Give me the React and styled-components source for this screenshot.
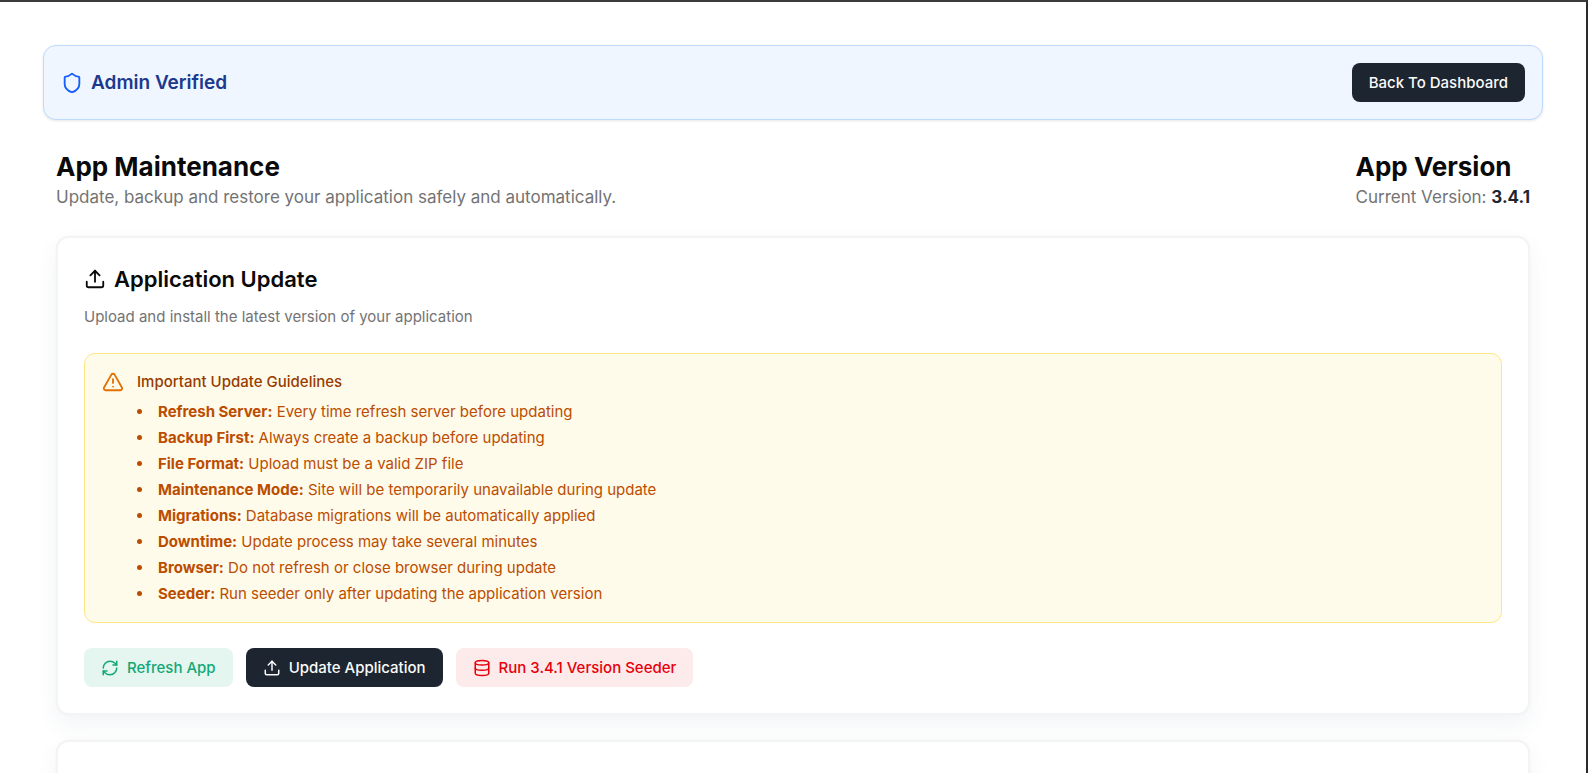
import styled, { createGlobalStyle } from "styled-components";
import { Database, RefreshCw, Shield, TriangleAlert, Upload } from "lucide-react";

const guidelines = [
  { label: "Refresh Server:", text: "Every time refresh server before updating" },
  { label: "Backup First:", text: "Always create a backup before updating" },
  { label: "File Format:", text: "Upload must be a valid ZIP file" },
  { label: "Maintenance Mode:", text: "Site will be temporarily unavailable during update" },
  { label: "Migrations:", text: "Database migrations will be automatically applied" },
  { label: "Downtime:", text: "Update process may take several minutes" },
  { label: "Browser:", text: "Do not refresh or close browser during update" },
  { label: "Seeder:", text: "Run seeder only after updating the application version" },
];

const App = () => {
  return (
    <>
      <GlobalStyle />
      <Page>
        <Banner>
          <BannerTitle>
            <Shield size={22} color="#155dfc" />
            Admin Verified
          </BannerTitle>
          <Button type="button">Back To Dashboard</Button>
        </Banner>
        <Content>
          <Header>
            <div>
              <Heading as="h1">App Maintenance</Heading>
              <Lead>
                Update, backup and restore your application safely and
                automatically.
              </Lead>
            </div>
            <div>
              <Heading>App Version</Heading>
              <Lead>
                Current Version: <strong>3.4.1</strong>
              </Lead>
            </div>
          </Header>
          <Cards>
            <Card>
              <CardTitle>
                <Upload size={22} />
                Application Update
              </CardTitle>
              <CardText>
                Upload and install the latest version of your application
              </CardText>
              <Notice>
                <TriangleAlert size={22} color="#e17100" />
                <div>
                  <NoticeTitle>Important Update Guidelines</NoticeTitle>
                  <NoticeList>
                    {guidelines.map((item) => (
                      <li key={item.label}>
                        <strong>{item.label}</strong> {item.text}
                      </li>
                    ))}
                  </NoticeList>
                </div>
              </Notice>
              <Actions>
                <Button type="button" $tone="success">
                  <RefreshCw size={18} />
                  Refresh App
                </Button>
                <Button type="button">
                  <Upload size={18} />
                  Update Application
                </Button>
                <Button type="button" $tone="danger">
                  <Database size={18} />
                  Run 3.4.1 Version Seeder
                </Button>
              </Actions>
            </Card>
            <Card />
          </Cards>
        </Content>
      </Page>
    </>
  );
};

export default App;

const tones = {
  dark: { background: "#1d2530", color: "#fafafa" },
  success: { background: "#e5f5ef", color: "#12a876" },
  danger: { background: "#fdeaea", color: "#e7000b" },
};

const GlobalStyle = createGlobalStyle`
  * {
    box-sizing: border-box;
  }
  body {
    margin: 0;
    background: #fff;
    color: #0a0a0a;
    font-family: Inter, "Liberation Sans", sans-serif;
  }
  h1, h2, h3, p, ul {
    margin: 0;
  }
  svg {
    flex-shrink: 0;
  }
`;

const Page = styled.main`
  height: 100vh;
  overflow: hidden;
  padding: 43px 43px 0;
  border-top: 2px solid #3c3c3c;
  border-right: 2px solid #2b2b2b;
`;

const Banner = styled.section`
  display: flex;
  align-items: center;
  justify-content: space-between;
  padding: 17px;
  border: 1px solid #bedbff;
  border-radius: 13px;
  background: #eff6ff;
  box-shadow: 0 1px 3px rgba(0, 0, 0, 0.1);
`;

const BannerTitle = styled.h2`
  display: flex;
  align-items: center;
  gap: 8px;
  color: #1c398e;
  font-size: 19px;
  line-height: 28px;
  font-weight: 600;
`;

const Button = styled.button`
  display: inline-flex;
  align-items: center;
  gap: 8px;
  height: 39px;
  padding: 0 17px;
  border: 0;
  border-radius: 8px;
  background: ${(props) => tones[props.$tone || "dark"].background};
  color: ${(props) => tones[props.$tone || "dark"].color};
  font-family: inherit;
  font-size: 15px;
  line-height: 22px;
  font-weight: 500;
  cursor: pointer;
`;

const Content = styled.div`
  display: flex;
  flex-direction: column;
  gap: 26px;
  padding: 29px 13px 0;
`;

const Header = styled.header`
  display: flex;
  justify-content: space-between;
`;

const Heading = styled.h2`
  font-size: 26px;
  line-height: 35px;
  font-weight: 700;
`;

const Lead = styled.p`
  color: #737373;
  font-size: 17px;
  line-height: 26px;
  strong {
    color: #1d2530;
    font-weight: 700;
  }
`;

const Cards = styled.div`
  display: flex;
  flex-direction: column;
  gap: 25px;
`;

const Card = styled.section`
  min-height: 240px;
  padding: 27px 26px 26px;
  border: 2px solid #f4f4f5;
  border-radius: 13px;
  background: #fff;
  box-shadow: 0 0 2px rgba(0, 0, 0, 0.05),
    0 10px 22px rgba(71, 95, 133, 0.07);
`;

const CardTitle = styled.h3`
  display: flex;
  align-items: center;
  gap: 8px;
  font-size: 22px;
  line-height: 28px;
  font-weight: 600;
`;

const CardText = styled.p`
  margin-top: 13px;
  color: #737373;
  font-size: 15px;
  line-height: 22px;
`;

const Notice = styled.div`
  display: flex;
  gap: 13px;
  margin-top: 25px;
  padding: 17px;
  border: 1px solid #fee685;
  border-radius: 11px;
  background: #fffbeb;
  color: #bb4d00;
  font-size: 15px;
  line-height: 22px;
`;

const NoticeTitle = styled.h3`
  color: #973c00;
  font-size: 15px;
  font-weight: 500;
`;

const NoticeList = styled.ul`
  display: flex;
  flex-direction: column;
  gap: 4px;
  margin-top: 8px;
  padding: 0;
  list-style: disc inside;
  strong {
    font-weight: 700;
  }
`;

const Actions = styled.div`
  display: flex;
  flex-wrap: wrap;
  gap: 13px;
  margin-top: 25px;
`;
